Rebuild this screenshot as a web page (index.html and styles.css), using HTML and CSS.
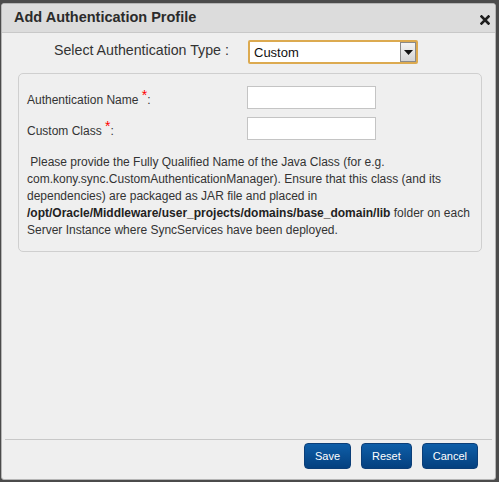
FILE: index.html
```html
<!DOCTYPE html>
<html>
<head>
<meta charset="utf-8">
<link rel="stylesheet" href="styles.css">
</head>
<body>
<div class="dialog">
  <div class="titlebar">
    <span class="title">Add Authentication Profile</span>
    <svg class="close" width="10" height="10" viewBox="0 0 10 10"><path d="M1.5 1.5L8.5 8.5M8.5 1.5L1.5 8.5" stroke="#1e1e1e" stroke-width="2.6" stroke-linecap="square"/></svg>
  </div>
  <div class="content">
    <div class="type-row">
      <span class="type-label">Select Authentication Type :</span>
      <div class="select">
        <span class="select-value">Custom</span>
        <span class="select-btn"><svg width="9" height="5" viewBox="0 0 9 5"><path d="M0 0H9L4.5 5Z" fill="#111"/></svg></span>
      </div>
    </div>
    <div class="panel">
      <div class="field">
        <span class="label">Authentication Name <span class="req">*</span>:</span>
        <span class="input"></span>
      </div>
      <div class="field">
        <span class="label">Custom Class <span class="req">*</span>:</span>
        <span class="input"></span>
      </div>
      <p class="note">&nbsp;Please provide the Fully Qualified Name of the Java Class (for e.g. com.kony.sync.CustomAuthenticationManager). Ensure that this class (and its dependencies) are packaged as JAR file and placed in <b>/opt/Oracle/Middleware/user_projects/domains/base_domain/lib</b> folder on each Server Instance where SyncServices have been deployed.</p>
    </div>
  </div>
  <div class="footer">
    <button class="btn">Save</button>
    <button class="btn">Reset</button>
    <button class="btn">Cancel</button>
  </div>
</div>
</body>
</html>
```
FILE: styles.css
```css
html, body {
  margin: 0;
  padding: 0;
  background: #4b4b4b;
  width: 499px;
  height: 482px;
  overflow: hidden;
  font-family: "Liberation Sans", Arial, sans-serif;
}
.dialog {
  margin: 3px 3px 0 1px;
  width: 493px;
  height: 475px;
  background: #efefef;
  border: 1px solid #b5b5b5;
  border-radius: 3px;
  display: flex;
  flex-direction: column;
  overflow: hidden;
}
.titlebar {
  height: 28px;
  background: #dcdcdc;
  border-bottom: 1px solid #c8c8c8;
  display: flex;
  align-items: center;
  justify-content: space-between;
  padding: 0 5px 0 12px;
  flex: none;
}
.title {
  font-size: 14.5px;
  font-weight: bold;
  color: #2b2b2b;
  margin-top: -3px;
}
.close {
  display: block;
  margin-top: 4px;
}
.content {
  flex: 1;
  display: flex;
  flex-direction: column;
  padding: 0 13px 0 16px;
}
.type-row {
  display: flex;
  align-items: center;
  height: 24px;
  margin-top: 7px;
}
.type-label {
  font-size: 14.2px;
  color: #333;
  margin-left: 36px;
  width: 194px;
  margin-top: -5px;
}
.select {
  width: 166px;
  height: 20px;
  border: 2px solid #dcaa50;
  border-radius: 2px;
  background: #fff;
  display: flex;
  align-items: center;
  justify-content: space-between;
}
.select-value {
  font-size: 13px;
  color: #111;
  padding-left: 4px;
  margin-top: 1px;
}
.select-btn {
  border: 1px solid #8a8a8a;
  background: linear-gradient(#f4f4f4, #d4d4d4);
  display: flex;
  align-items: center;
  justify-content: center;
  box-sizing: border-box;
  width: 16px;
  height: 20px;
}
.panel {
  margin-top: 9px;
  border: 1px solid #cfcfcf;
  border-radius: 5px;
  padding: 12px 8px 10px 8px;
  height: 155px;
}
.field {
  display: flex;
  align-items: center;
  height: 23px;
  margin-bottom: 8px;
}
.label {
  font-size: 12px;
  color: #333;
  width: 220px;
  margin-top: 3px;
}
.req {
  color: #f00;
  font-size: 14px;
  position: relative;
  top: -4px;
}
.input {
  width: 127px;
  height: 21px;
  border: 1px solid #c4c4c4;
  background: #fff;
}
.note {
  margin: 14px 0 0 0;
  font-size: 12px;
  line-height: 17px;
  color: #333;
}
.note b {
  color: #222;
}
.footer {
  flex: none;
  box-sizing: border-box;
  margin: 0 3px;
  border-top: 1px solid #c8c8c8;
  height: 40px;
  display: flex;
  justify-content: flex-end;
  align-items: flex-start;
  padding: 3px 14px 0 0;
  gap: 10px;
}
.btn {
  height: 26px;
  padding: 0 10px;
  border: 1px solid #0b3e78;
  border-radius: 4px;
  background: linear-gradient(#0e5ea8, #04407f);
  color: #fff;
  font-family: "Liberation Sans", Arial, sans-serif;
  font-size: 11px;
  font-weight: normal;
}
```
